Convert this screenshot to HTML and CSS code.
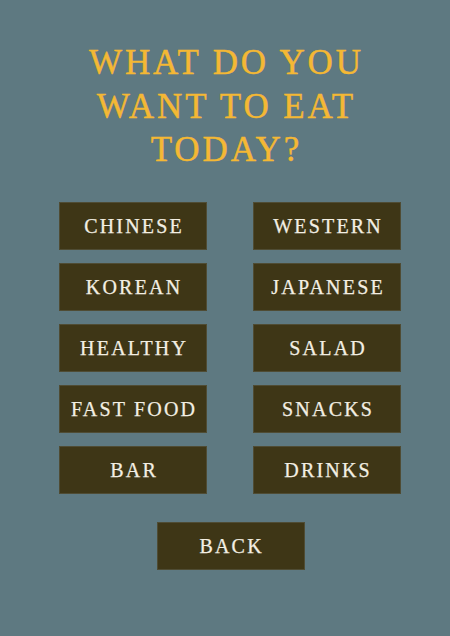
FILE: index.html
```html
<!DOCTYPE html>
<html lang="en">
<head>
<meta charset="utf-8">
<title>What do you want to eat today?</title>
<link rel="stylesheet" href="styles.css">
</head>
<body>
<main class="page">
  <h1 class="title">WHAT DO YOU<br>WANT TO EAT<br>TODAY?</h1>
  <div class="grid">
    <button class="btn">CHINESE</button>
    <button class="btn">WESTERN</button>
    <button class="btn">KOREAN</button>
    <button class="btn">JAPANESE</button>
    <button class="btn">HEALTHY</button>
    <button class="btn">SALAD</button>
    <button class="btn">FAST FOOD</button>
    <button class="btn">SNACKS</button>
    <button class="btn">BAR</button>
    <button class="btn">DRINKS</button>
  </div>
  <div class="back-row">
    <button class="btn">BACK</button>
  </div>
</main>
</body>
</html>
```
FILE: styles.css
```css
html, body {
  margin: 0;
  padding: 0;
  background: #5e7981;
  height: 100%;
}
.page {
  width: 450px;
  height: 636px;
  display: flex;
  flex-direction: column;
  align-items: center;
  font-family: "Liberation Serif", "DejaVu Serif", serif;
}
.title {
  margin: 41px 0 0 0;
  font-weight: normal;
  font-size: 35px;
  line-height: 43.5px;
  letter-spacing: 2.9px;
  padding-left: 2.9px;
  color: #f4b834;
  -webkit-text-stroke: 0.45px #f4b834;
  text-align: center;
}
.grid {
  margin: 30px 0 0 10px;
  display: grid;
  grid-template-columns: 148px 148px;
  column-gap: 46px;
  row-gap: 13px;
}
.btn {
  width: 148px;
  height: 48px;
  margin: 0;
  padding: 1px 0 0 2.2px;
  background: #3e3616;
  border: 1px solid #4f4c34;
  color: #f3efe3;
  -webkit-text-stroke: 0.25px #f3efe3;
  font-family: "Liberation Serif", "DejaVu Serif", serif;
  font-size: 20px;
  letter-spacing: 2.2px;
  display: flex;
  align-items: center;
  justify-content: center;
  line-height: 1;
}
.back-row {
  margin: 28px 0 0 11px;
  display: flex;
  justify-content: center;
}
```
